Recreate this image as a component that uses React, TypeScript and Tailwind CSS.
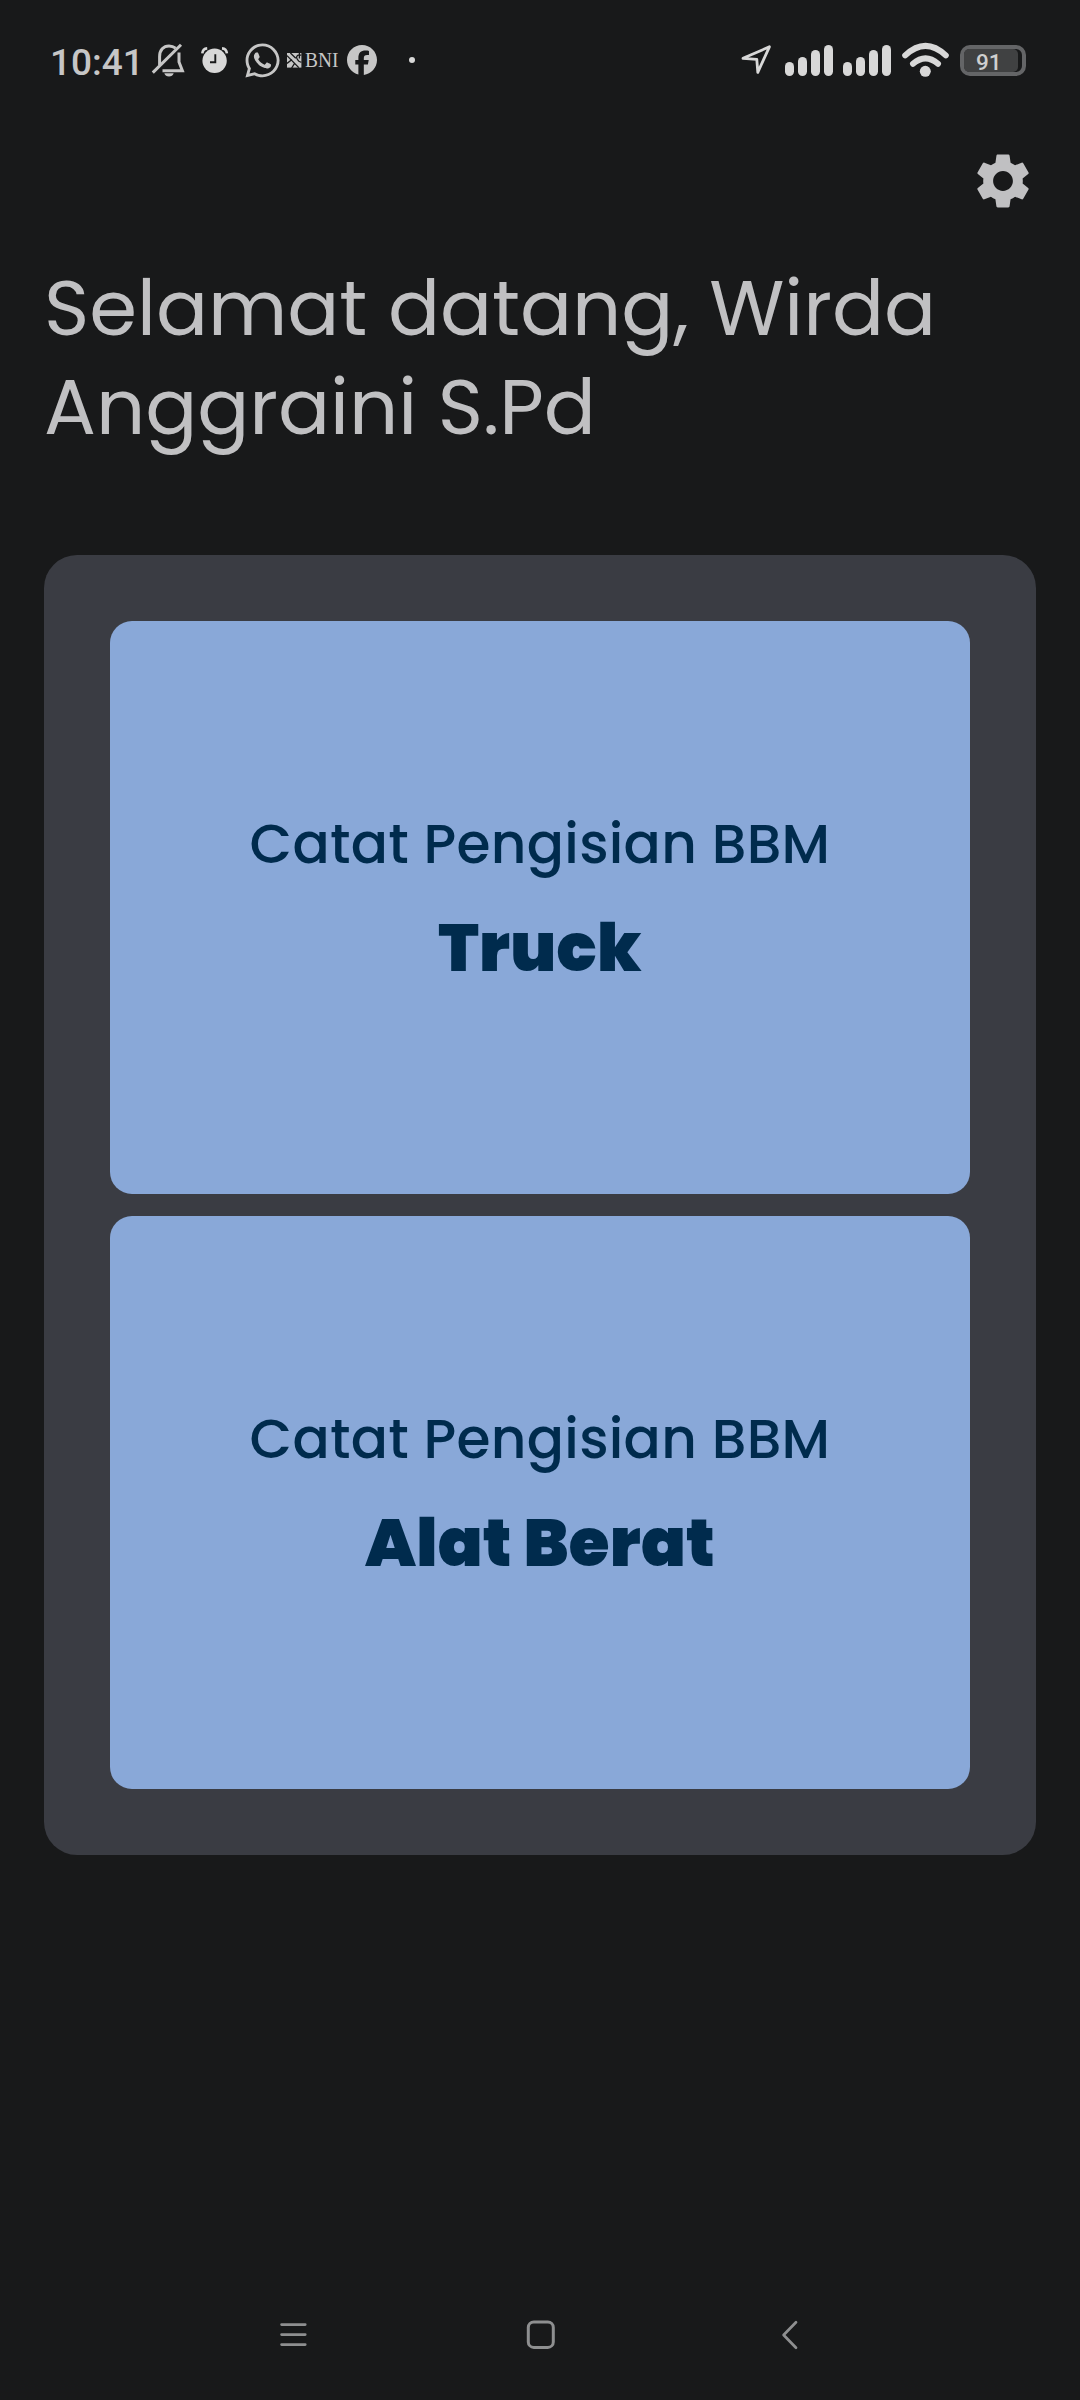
import { FaFacebook, FaWhatsapp } from "react-icons/fa6";
import { MdSettings } from "react-icons/md";

function BellOff() {
  return (
    <svg className="h-[34px] w-[34px] shrink-0" viewBox="0 0 34 34" fill="none" stroke="currentColor" strokeWidth="3">
      <path d="M1.8 29.6 30 1.8" />
      <path d="M8.6 22V13.5C8.6 7 12.5 2.9 18 2.9c2.6 0 4.6.7 6.6 2.3" />
      <path d="M28 9.5V19l3.4 8.8H11.5" />
      <path d="M13.3 30.2h9.4c-.8 2.2-2.4 3.2-4.7 3.2s-3.9-1-4.7-3.2z" fill="currentColor" stroke="none" />
    </svg>
  );
}

function Alarm() {
  return (
    <svg className="h-[28px] w-[29px] shrink-0" viewBox="0 0 29 28" fill="none">
      <circle cx="14.6" cy="14.8" r="12.2" fill="#d8d8d8" />
      <path d="M15.3 8.3v8H10" stroke="#18191a" strokeWidth="1.9" />
      <path d="M2.3 7.4C2.6 4.5 4.6 2.6 7.2 2.4M26.9 7.4C26.6 4.5 24.6 2.6 22 2.4" stroke="#d8d8d8" strokeWidth="2.6" />
    </svg>
  );
}

function BniMark() {
  return (
    <svg className="h-[15px] w-[15px] shrink-0" viewBox="0 0 15 15">
      <rect width="14.4" height="14.6" fill="currentColor" />
      <g fill="none" stroke="#18191a" strokeWidth="1.3">
        <path d="M0 2.6 11.8 14.6M3.4 0l5.4 5.2M0 10.4 5 6.4M4.6 15l3-4.6" />
        <path d="M14.4 2.2c-3.8-1-5.8 1-4.4 3.6s3.2 3.4 4.4 3.2M12.4 0v5.4" />
      </g>
    </svg>
  );
}

function Signal() {
  return (
    <div className="flex h-[31px] items-end gap-1">
      <span className="h-[13.5px] w-[9px] rounded-full bg-[#d8d8d8]" />
      <span className="h-[19px] w-[9px] rounded-full bg-[#d8d8d8]" />
      <span className="h-[25.5px] w-[9px] rounded-full bg-[#d8d8d8]" />
      <span className="h-[31px] w-[9px] rounded-full bg-[#d8d8d8]" />
    </div>
  );
}

function StatusBar() {
  return (
    <header className="flex h-[88px] items-center justify-between pt-8 pr-[54px] pl-[50px] text-[#c6c6c6]">
      <div className="flex items-center">
        <span className="w-[101px] pt-1.5 font-[Roboto,sans-serif] text-[37px] leading-10 font-medium">10:41</span>
        <BellOff />
        <span className="ml-[15px] flex">
          <Alarm />
        </span>
        <FaWhatsapp className="ml-[13.5px] shrink-0" size={39} />
        <span className="ml-[5.5px] flex w-[51px] items-center">
          <BniMark />
          <span className="ml-[2.5px] origin-left scale-x-90 font-['Liberation_Serif',serif] text-[21.5px] leading-7">BNI</span>
        </span>
        <FaFacebook className="ml-[9px] shrink-0" size={30} />
        <span className="ml-8 size-[6px] rounded-full bg-[#d8d8d8]" />
      </div>
      <div className="flex items-center">
        <svg className="h-[32px] w-[32px]" viewBox="0 0 32 32" fill="none" stroke="#d8d8d8" strokeWidth="2.8" strokeLinejoin="round">
          <path d="M3 14.3 29.4 2.8 17.8 28.4 16.8 15.4z" />
        </svg>
        <div className="ml-[13px] flex gap-[10px]">
          <Signal />
          <Signal />
        </div>
        <svg className="ml-[10px] h-[36px] w-[49px]" viewBox="0 0 49 36" fill="none" stroke="#d8d8d8" strokeWidth="6" strokeLinecap="round">
          <path d="M4.2 13.4Q24.5-5.6 44.8 13.4" />
          <path d="M12 21.8Q24.5 10.8 37 21.8" />
          <circle cx="24.3" cy="29.3" r="5.5" fill="#d8d8d8" stroke="none" />
        </svg>
        <div className="ml-[10px] flex h-[31px] w-[66px] rounded-[10px] border-4 border-[#646567]">
          <div className="w-[54px] rounded-[5px] bg-[#404142] pl-[12px] font-[Roboto,sans-serif] text-[22.5px] leading-[27px] font-medium text-[#cfcfcf]">91</div>
        </div>
      </div>
    </header>
  );
}

function FuelCard({ name }: { name: string }) {
  return (
    <button className="flex h-[573px] w-full flex-col items-center gap-[22px] rounded-[22px] bg-[#89a8d8] pt-[184px] text-[#002b4d]">
      <span className="text-[55px] leading-[77px] font-medium tracking-[0.28px]">Catat Pengisian BBM</span>
      <span className="text-[66px] leading-[88px] font-black tracking-[0.28px]">{name}</span>
    </button>
  );
}

function NavBar() {
  return (
    <nav className="mt-auto flex h-[130px] items-center pl-[279px] text-[#8e8f90]">
      <svg className="h-[30px] w-[29px]" viewBox="0 0 29 30" stroke="currentColor" strokeWidth="2.8" strokeLinecap="round">
        <path d="M2.6 4.6h23.6M2.6 14.6h23.6M2.6 24.6h23.6" />
      </svg>
      <svg className="ml-[218px] h-[32px] w-[30px]" viewBox="0 0 30 32" fill="none" stroke="currentColor" strokeWidth="3">
        <rect x="2.3" y="3" width="25" height="25.4" rx="5.5" />
      </svg>
      <svg className="ml-[225px] h-[30px] w-[17px]" viewBox="0 0 17 30" fill="none" stroke="currentColor" strokeWidth="2.7" strokeLinecap="round" strokeLinejoin="round">
        <path d="M15 2.2 2.6 15 15 27.8" />
      </svg>
    </nav>
  );
}

export default function App() {
  return (
    <div className="flex h-[2400px] w-[1080px] flex-col bg-[#18191a] font-[Poppins,Inter,sans-serif]">
      <StatusBar />
      <div className="flex justify-end pt-[60px] pr-11">
        <button aria-label="Settings" className="text-[#c0c0c2]">
          <MdSettings size={66} />
        </button>
      </div>
      <h1 className="mt-[45px] px-11 text-[77px] leading-[99px] font-normal text-[#c0c0c2]">Selamat datang, Wirda Anggraini S.Pd</h1>
      <main className="mx-11 mt-[98px] flex h-[1300px] flex-col gap-[22px] rounded-[33px] bg-[#3a3c43] p-[66px]">
        <FuelCard name="Truck" />
        <FuelCard name="Alat Berat" />
      </main>
      <NavBar />
    </div>
  );
}
